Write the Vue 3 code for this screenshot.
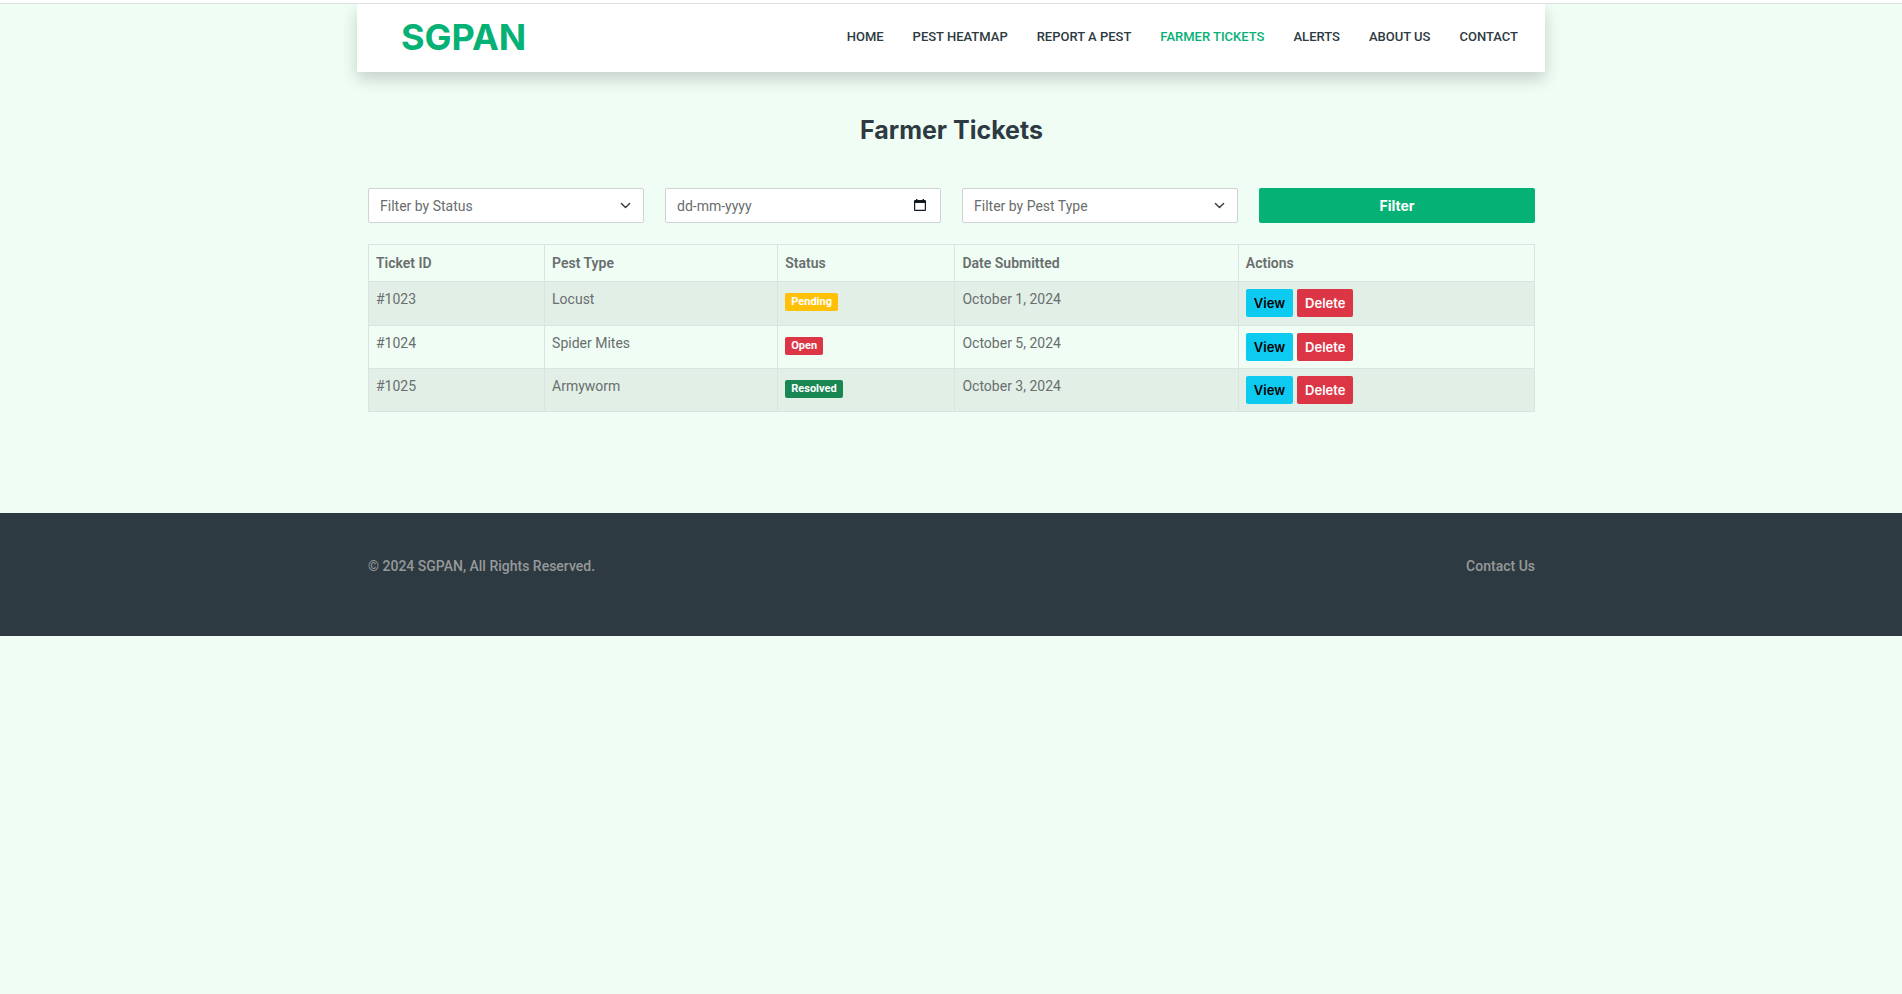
<script setup>
import { ref } from 'vue'

const links = ['Home', 'Pest Heatmap', 'Report a Pest', 'Farmer Tickets', 'Alerts', 'About Us', 'Contact']
const active = 'Farmer Tickets'

const status = ref('')
const date = ref('')
const pest = ref('')

const tickets = [
  { id: '#1023', pest: 'Locust', status: 'Pending', date: 'October 1, 2024' },
  { id: '#1024', pest: 'Spider Mites', status: 'Open', date: 'October 5, 2024' },
  { id: '#1025', pest: 'Armyworm', status: 'Resolved', date: 'October 3, 2024' },
]
</script>

<template>
  <div class="page">
    <header class="top">
      <nav class="container navbar" aria-label="Main">
        <a class="brand" href="#">SGPAN</a>
        <ul class="links">
          <li v-for="link in links" :key="link">
            <a href="#" :class="{ active: link === active }">{{ link }}</a>
          </li>
        </ul>
      </nav>
    </header>

    <main class="container content">
      <h1>Farmer Tickets</h1>

      <form class="filters" @submit.prevent>
        <div class="field">
          <select v-model="status" class="control" aria-label="Filter by Status">
            <option value="">Filter by Status</option>
            <option>Pending</option>
            <option>Open</option>
            <option>Resolved</option>
          </select>
          <svg class="icon chevron" viewBox="0 0 16 16" aria-hidden="true">
            <path d="m2 5 6 6 6-6" />
          </svg>
        </div>
        <div class="field">
          <input v-model="date" class="control" type="text" placeholder="dd-mm-yyyy" aria-label="Date submitted" />
          <svg class="icon calendar" viewBox="0 0 14 14" aria-hidden="true">
            <path fill-rule="evenodd" d="M3 1h1.400v1h5.200V1H11v1h1q1 0 1 1v9q0 1-1 1H2q-1 0-1-1V3q0-1 1-1h1zM2.200 5v6.800h9.600V5z" />
          </svg>
        </div>
        <div class="field">
          <select v-model="pest" class="control" aria-label="Filter by Pest Type">
            <option value="">Filter by Pest Type</option>
            <option>Locust</option>
            <option>Spider Mites</option>
            <option>Armyworm</option>
          </select>
          <svg class="icon chevron" viewBox="0 0 16 16" aria-hidden="true">
            <path d="m2 5 6 6 6-6" />
          </svg>
        </div>
        <button class="submit" type="submit">Filter</button>
      </form>

      <table>
        <colgroup>
          <col class="col-id" />
          <col class="col-pest" />
          <col class="col-status" />
          <col class="col-date" />
          <col />
        </colgroup>
        <thead>
          <tr>
            <th scope="col">Ticket ID</th>
            <th scope="col">Pest Type</th>
            <th scope="col">Status</th>
            <th scope="col">Date Submitted</th>
            <th scope="col">Actions</th>
          </tr>
        </thead>
        <tbody>
          <tr v-for="t in tickets" :key="t.id">
            <td>{{ t.id }}</td>
            <td>{{ t.pest }}</td>
            <td><span class="badge" :class="t.status.toLowerCase()">{{ t.status }}</span></td>
            <td>{{ t.date }}</td>
            <td>
              <div class="actions">
                <button type="button" class="view">View</button>
                <button type="button" class="delete">Delete</button>
              </div>
            </td>
          </tr>
        </tbody>
      </table>
    </main>

    <footer>
      <div class="container foot">
        <span>© 2024 SGPAN, All Rights Reserved.</span>
        <a href="#">Contact Us</a>
      </div>
    </footer>
  </div>
</template>

<style>
body {
  background: #effdf5;
}
</style>

<style scoped>
.page {
  color: #696e6d;
  font: 14px/22px Roboto, "Liberation Sans", sans-serif;
}
.page * {
  box-sizing: border-box;
}
.page::before {
  content: "";
  display: block;
  height: 3px;
  background: #fff;
  border-bottom: 1px solid #dee2e1;
}
a {
  color: inherit;
  text-decoration: none;
}
.container {
  width: 100%;
  max-width: 1190px;
  margin: 0 auto;
  padding: 0 11px 0 12px;
}
.top {
  overflow: hidden;
  padding-bottom: 36px;
}
.navbar {
  display: flex;
  align-items: center;
  justify-content: space-between;
  max-width: 1188px;
  height: 68px;
  padding: 0 27px 3px 44px;
  background: #fff;
  box-shadow: 0 7px 15px rgba(0, 0, 0, 0.18);
}
.brand {
  color: #05b175;
  font: 700 36px/44px Inter, sans-serif;
}
.links {
  display: flex;
  gap: 29px;
  margin: 0;
  padding: 0;
  list-style: none;
}
.links a {
  color: #2d3a41;
  font-size: 13px;
  font-weight: 500;
  text-transform: uppercase;
}
.links .active {
  color: #05b175;
}
.content {
  padding-bottom: 101px;
}
h1 {
  margin: 6px 0 42px;
  color: #2d3a41;
  font: 700 25px/32px Inter, sans-serif;
  text-align: center;
}
.filters {
  display: grid;
  grid-template-columns: repeat(4, 1fr);
  gap: 21px;
  margin-bottom: 21px;
}
.field {
  position: relative;
}
.control {
  display: block;
  width: 100%;
  height: 35px;
  padding: 0 11px;
  border: 1px solid #ced4d2;
  border-radius: 2px;
  appearance: none;
  background: #fff;
  color: #696e6d;
  font: inherit;
}
.control::placeholder {
  color: #696e6d;
  opacity: 1;
}
.icon {
  position: absolute;
  top: 50%;
  pointer-events: none;
}
.chevron {
  right: 13px;
  width: 11px;
  height: 11px;
  margin-top: -6px;
  fill: none;
  stroke: #343a40;
  stroke-width: 2;
  stroke-linecap: round;
  stroke-linejoin: round;
}
.calendar {
  right: 14px;
  width: 14px;
  height: 14px;
  margin-top: -8px;
  fill: #101820;
}
button {
  border: 0;
  font-family: Inter, sans-serif;
  font-weight: 600;
}
.submit {
  height: 35px;
  border-radius: 2px;
  background: #05b175;
  color: #fff;
  font-size: 14px;
  font-weight: 700;
}
table {
  width: 100%;
  border-collapse: collapse;
  table-layout: fixed;
}
.col-id { width: 15.1%; }
.col-pest { width: 20%; }
.col-status { width: 15.2%; }
.col-date { width: 24.3%; }
th,
td {
  padding: 7px;
  border: 1px solid #dae3df;
  text-align: left;
  vertical-align: top;
}
th {
  font-weight: 600;
}
td {
  padding-top: 6px;
}
tbody tr:first-child td {
  padding-bottom: 8px;
}
tbody tr:nth-child(odd) {
  background: #e2efe7;
}
.badge {
  display: block;
  width: fit-content;
  margin-top: 5px;
  padding: 0 6px;
  border-radius: 2px;
  color: #fff;
  font-size: 11px;
  font-weight: 700;
  line-height: 18px;
}
.pending { background: #ffc107; }
.open { background: #dc3545; }
.resolved { background: #198754; }
.actions {
  display: flex;
  gap: 4px;
  padding-top: 1px;
}
.actions button {
  height: 28px;
  padding: 0 8px;
  border-radius: 2px;
  font-size: 13px;
}
.view {
  background: #0dcaf0;
  color: #000;
}
.delete {
  background: #dc3545;
  color: #fff;
}
footer {
  background: #2d3a41;
  color: #96999a;
  font-weight: 500;
}
.foot {
  display: flex;
  justify-content: space-between;
  padding-top: 42px;
  padding-bottom: 59px;
}
</style>
